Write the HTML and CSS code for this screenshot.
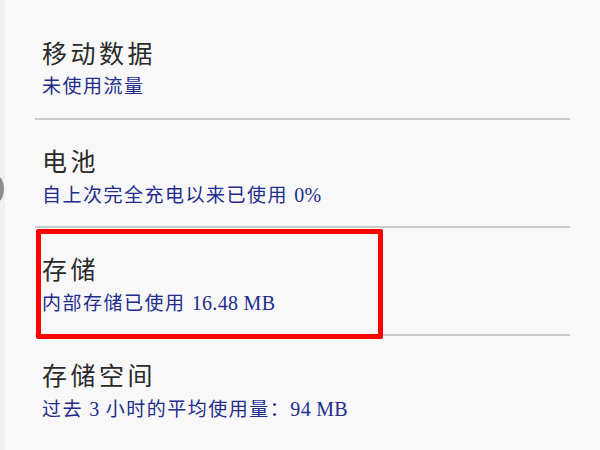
FILE: index.html
```html
<!DOCTYPE html>
<html lang="zh-CN">
<head>
<meta charset="utf-8">
<title>设置</title>
<link rel="stylesheet" href="styles.css">
</head>
<body>
<div class="screen">
  <div class="edge"></div>
  <div class="handle"></div>
  <ul class="list">
    <li class="item item-first">
      <div class="title">移动数据</div>
      <div class="summary">未使用流量</div>
    </li>
    <li class="item">
      <div class="title">电池</div>
      <div class="summary">自上次完全充电以来已使用 <span class="num">0%</span></div>
    </li>
    <li class="item">
      <div class="highlight"></div>
      <div class="title">存储</div>
      <div class="summary">内部存储已使用 <span class="num">16.48 MB</span></div>
    </li>
    <li class="item item-last">
      <div class="title">存储空间</div>
      <div class="summary">过去 <span class="num">3</span> 小时的平均使用量：<span class="num">94 MB</span></div>
    </li>
  </ul>
</div>
</body>
</html>
```

FILE: styles.css
```css
html, body {
  margin: 0;
  padding: 0;
  background: #f8f8f8;
}

.screen {
  position: relative;
  width: 600px;
  height: 450px;
  overflow: hidden;
  background: #f8f8f8;
  display: flex;
  font-family: "Liberation Serif", "Noto Sans CJK SC", serif;
}

.edge {
  width: 5px;
  flex: none;
  background: #f0f0f0;
}

.handle {
  position: absolute;
  left: -10px;
  top: 176px;
  width: 14px;
  height: 26px;
  border-radius: 50%;
  background: #8c8c8c;
}

.list {
  list-style: none;
  margin: 0 0 0 30px;
  padding: 0;
  width: 535px;
}

.item {
  position: relative;
  box-sizing: border-box;
  height: 108px;
  padding: 28px 0 0 7px;
  border-bottom: 2px solid #cacaca;
}

.item-first {
  margin-top: 12px;
}

.item-last {
  border-bottom: none;
  padding-top: 26px;
}

.title {
  font-size: 25px;
  line-height: 30px;
  letter-spacing: 3.5px;
  color: #2a2a2a;
}

.summary {
  margin-top: 5px;
  font-size: 19px;
  line-height: 24px;
  letter-spacing: 1.5px;
  color: #222c8c;
}

.num {
  font-size: 20px;
  letter-spacing: 0.3px;
}

.highlight {
  position: absolute;
  left: 1px;
  top: 1px;
  width: 347px;
  height: 110px;
  box-sizing: border-box;
  border: 5px solid #ff0000;
  border-radius: 2px;
}
```
